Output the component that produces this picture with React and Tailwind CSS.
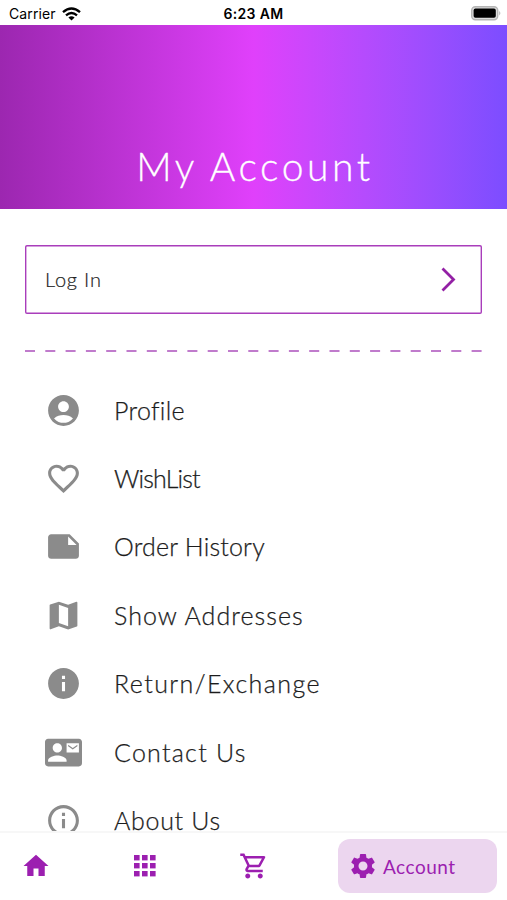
import { MdAccountCircle, MdFavoriteBorder, MdNote, MdMap, MdInfo, MdContactMail, MdInfoOutline, MdHome, MdOutlineShoppingCart, MdSettings } from "react-icons/md"

const menuItems = [
  { id: 1, label: "Profile", icon: MdAccountCircle, tracking: "tracking-[0.3px]" },
  { id: 2, label: "WishList", icon: MdFavoriteBorder, tracking: "tracking-[-0.85px]" },
  { id: 3, label: "Order History", icon: MdNote, tracking: "tracking-[0.2px]" },
  { id: 4, label: "Show Addresses", icon: MdMap, tracking: "tracking-[1.05px]" },
  { id: 5, label: "Return/Exchange", icon: MdInfo, tracking: "tracking-[1.4px]" },
  { id: 6, label: "Contact Us", icon: MdContactMail, tracking: "tracking-[1.25px]" },
  { id: 7, label: "About Us", icon: MdInfoOutline, tracking: "tracking-[0.7px]" },
]

const WifiIcon = () => (
  <svg width="19" height="14" viewBox="0 0 19 14" fill="none" stroke="#000" strokeWidth="2.4">
    <path d="M1 5.2Q9.5 -2.2 18 5.2" />
    <path d="M4 8.3Q9.5 3.6 15 8.3" />
    <path d="M9.5 13.5 6.4 10.4Q9.5 7.9 12.6 10.4Z" fill="#000" stroke="none" />
  </svg>
)

const BatteryIcon = () => (
  <svg width="31" height="15" viewBox="0 0 31 15">
    <rect x="0.7" y="0.7" width="26" height="13" rx="3.6" fill="#ddd" stroke="#b5b5b5" strokeWidth="1.4" />
    <rect x="2.6" y="2.6" width="22.2" height="9.2" rx="1.8" fill="#000" />
    <path d="M28.3 5q2 2.2 0 4.5z" fill="#aaa" />
  </svg>
)

const GridIcon = () => (
  <svg width="22" height="22" viewBox="0 0 22 22" fill="currentColor">
    {[0, 8, 16].map((y) =>
      [0, 8, 16].map((x) => <rect key={`${x}-${y}`} x={x} y={y} width="5.6" height="5.4" />)
    )}
  </svg>
)

const StatusBar = () => (
  <div className="grid h-[25px] shrink-0 grid-cols-3 items-center pl-[9px] pr-[5px] font-['Inter',sans-serif] text-black">
    <div className="flex items-center gap-1.5 pt-0.5 text-sm">
      <span className="tracking-[0.1px]">Carrier</span>
      <WifiIcon />
    </div>
    <span className="pr-1 pt-0.5 text-center text-sm font-semibold tracking-[0.35px]">6:23 AM</span>
    <div className="flex justify-end pt-0.5">
      <BatteryIcon />
    </div>
  </div>
)

const MenuItem = ({ label, icon: Icon, tracking }) => (
  <li className="flex h-[68.4px] shrink-0 items-center gap-8">
    <Icon className="size-[37px] text-[#8b8b8b]" />
    <span
      className={`whitespace-nowrap pb-px text-[25px] leading-5 font-light text-[#1c1c1c] [-webkit-text-stroke:0.25px_#1c1c1c] ${tracking}`}
    >
      {label}
    </span>
  </li>
)

const BottomNav = () => (
  <nav className="flex h-[69px] shrink-0 items-center border-t-2 border-[#f7f7f7] bg-white pb-[2px] pl-[21px] pr-[10px] text-[#9c1fb0]">
    <button className="w-[113px]">
      <MdHome className="size-[30px]" />
    </button>
    <button className="w-[105px]">
      <GridIcon />
    </button>
    <button>
      <MdOutlineShoppingCart className="size-[30px]" />
    </button>
    <button className="ml-auto flex h-[54px] w-[159px] items-center gap-[5px] rounded-xl bg-[#ecd6ef] pl-[10px]">
      <MdSettings className="size-[30px]" />
      <span className="pt-[3px] text-[19px] tracking-[0.5px]">Account</span>
    </button>
  </nav>
)

const App = () => {
  return (
    <div className="flex h-[900px] w-[507px] flex-col overflow-hidden bg-white font-['Lato',sans-serif]">
      <StatusBar />

      <header className="flex h-[184px] shrink-0 items-end justify-center bg-linear-to-r from-[#9c27b0] via-[#e040fb] to-[#7c4dff] pb-[14px]">
        <h1 className="pl-[3px] text-[39px] font-light tracking-[3.6px] text-white [-webkit-text-stroke:0.3px_#fff]">
          My Account
        </h1>
      </header>

      <main className="flex min-h-0 flex-1 flex-col overflow-hidden px-[25px] pt-9">
        <div className="flex h-[69px] shrink-0 items-center justify-between rounded-[2px] pl-5 pr-[26px] inset-ring-[1.4px] inset-ring-[#a93dbb]">
          <span className="pb-px text-[20px] font-light tracking-[0.8px] text-[#222] [-webkit-text-stroke:0.2px_#222]">
            Log In
          </span>
          <svg width="15" height="25" viewBox="0 0 15 25" fill="none" stroke="#9320a5" strokeWidth="2.8">
            <path d="M1.5 1.5 12.5 12.5 1.5 23.5" />
          </svg>
        </div>

        <svg className="mt-9 h-[2px] w-full shrink-0">
          <line x1="0" y1="1" x2="457" y2="1" stroke="#c07bcc" strokeWidth="2" strokeDasharray="10 10.3" />
        </svg>

        <ul className="mt-6 flex flex-col pl-5">
          {menuItems.map((item) => (
            <MenuItem key={item.id} {...item} />
          ))}
        </ul>
      </main>

      <BottomNav />
    </div>
  )
}

export default App
